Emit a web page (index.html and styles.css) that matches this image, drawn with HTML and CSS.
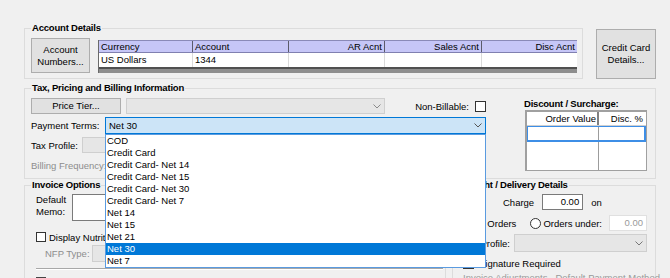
FILE: index.html
```html
<!DOCTYPE html>
<html lang="en">
<head>
  <meta charset="UTF-8">
  <title>Customer - Billing</title>
  <link rel="stylesheet" href="styles.css">
</head>
<body>
  <div class="form">

    <div class="row-top">
      <fieldset class="group acct">
        <legend>Account Details</legend>
        <div class="acct-body">
          <button class="btn btn-acct">Account<br>Numbers...</button>
          <div class="acct-grid">
            <div class="ag-head">
              <span>Currency</span>
              <span>Account</span>
              <span class="num">AR Acnt</span>
              <span class="num">Sales Acnt</span>
              <span class="num">Disc Acnt</span>
            </div>
            <div class="ag-row">
              <span>US Dollars</span>
              <span>1344</span>
              <span></span>
              <span></span>
              <span></span>
            </div>
            <div class="ag-bar"></div>
          </div>
        </div>
      </fieldset>
      <button class="btn btn-cc">Credit Card<br>Details...</button>
    </div>

    <fieldset class="group tax">
      <legend>Tax, Pricing and Billing Information</legend>
      <div class="tax-body">
        <div class="tax-left">
          <div class="line line-tier">
            <button class="btn btn-tier">Price Tier...</button>
            <div class="combo disabled tier-combo">
              <span></span>
              <svg width="8" height="5" viewBox="0 0 8 5"><polyline points="0.5,0.5 4,4 7.5,0.5" fill="none" stroke="#8a8a8a"/></svg>
            </div>
            <span class="nb-label">Non-Billable:</span>
            <span class="check"></span>
          </div>

          <div class="line line-terms">
            <span>Payment Terms:</span>
            <div class="combo-wrap">
              <div class="combo open">
                <span>Net 30</span>
                <svg width="8" height="5" viewBox="0 0 8 5"><polyline points="0.5,0.5 4,4 7.5,0.5" fill="none" stroke="#555"/></svg>
              </div>
              <ul class="drop">
                <li>COD</li>
                <li>Credit Card</li>
                <li>Credit Card- Net 14</li>
                <li>Credit Card- Net 15</li>
                <li>Credit Card- Net 30</li>
                <li>Credit Card- Net 7</li>
                <li>Net 14</li>
                <li>Net 15</li>
                <li>Net 21</li>
                <li class="sel">Net 30</li>
                <li>Net 7</li>
              </ul>
            </div>
          </div>

          <div class="line line-taxp">
            <span>Tax Profile:</span>
            <div class="combo disabled taxp-combo"><span></span></div>
          </div>

          <div class="line line-bill">Billing Frequency:</div>
        </div>

        <div class="tax-right">
          <div class="disc-title">Discount / Surcharge:</div>
          <div class="disc">
            <div class="disc-head"><span>Order Value</span><span>Disc. %</span></div>
            <div class="disc-sel"></div>
          </div>
        </div>
      </div>
    </fieldset>

    <div class="row-bottom">
      <fieldset class="group invoice">
        <legend>Invoice Options</legend>
        <div class="memo-row">
          <span class="memo-label">Default<br>Memo:</span>
          <div class="memo"></div>
        </div>
        <div class="nut-row">
          <span class="check small"></span>
          <span>Display Nutrition Facts Panel</span>
        </div>
        <div class="nfp-row">
          <span class="nfp-label">NFP Type:</span>
          <div class="combo disabled nfp-combo"><span></span></div>
        </div>
        <div class="sep"></div>
        <div class="last-row"><span class="check small dark"></span></div>
      </fieldset>

      <fieldset class="group freight">
        <legend>Freight / Delivery Details</legend>
        <div class="fr-charge">
          <span>Charge</span>
          <span class="field">0.00</span>
          <span class="on">on</span>
        </div>
        <div class="fr-orders">
          <span class="radio on-radio"></span>
          <span>All Orders</span>
          <span class="radio second"></span>
          <span class="under">Orders under:</span>
          <span class="field off">0.00</span>
        </div>
        <div class="fr-ship">
          <span class="ship-label">Ship Profile:</span>
          <div class="combo disabled ship-combo">
            <span></span>
            <svg width="8" height="5" viewBox="0 0 8 5"><polyline points="0.5,0.5 4,4 7.5,0.5" fill="none" stroke="#777"/></svg>
          </div>
        </div>
        <div class="fr-sig">
          <span class="check"></span>
          <span>Signature Required</span>
        </div>
        <div class="fr-more">Invoice Adjustments &nbsp; Default Payment Method</div>
      </fieldset>
    </div>

  </div>
</body>
</html>
```

FILE: styles.css
```css
* {
  box-sizing: border-box;
}

body {
  margin: 0;
  width: 670px;
  height: 278px;
  overflow: hidden;
  background: #f0f0f0;
  font-family: "Liberation Sans", Arial, sans-serif;
  font-size: 9.5px;
  color: #000;
}

.form {
  padding: 22px 0 0 24px;
}

/* group boxes */
.group {
  margin: 0;
  border: 1px solid #dcdcdc;
  min-inline-size: 0;
}
.group legend {
  padding: 0 1px;
  font-weight: bold;
  line-height: 12px;
  letter-spacing: -0.2px;
}

.btn {
  margin: 0;
  padding: 0;
  font: inherit;
  line-height: 12px;
  color: #000;
  background: #e1e1e1;
  border: 1px solid #adadad;
}

.check {
  display: inline-block;
  width: 11px;
  height: 11px;
  background: #fff;
  border: 1px solid #333;
}
.check.small {
  width: 10px;
  height: 10px;
}
.check.dark {
  background: #d0d0d0;
  border-color: #444;
}

.radio {
  display: inline-block;
  width: 11px;
  height: 11px;
  border: 1px solid #333;
  border-radius: 50%;
  background: #fff;
}
.radio.on-radio {
  background: radial-gradient(circle, #333 0 2px, #fff 2.5px);
}

.combo {
  display: flex;
  align-items: center;
  justify-content: space-between;
  padding: 0 3px;
  border: 1px solid #ccc;
}
.combo.disabled {
  background: #e6e6e6;
  border-color: #cfcfcf;
}
.combo.open {
  height: 17px;
  background: #cce4f7;
  border-color: #0078d7;
}

/* account details */
.row-top {
  display: flex;
  align-items: flex-start;
}
.acct {
  width: 559px;
  padding: 4px 5px 5px 6px;
}
.acct-body {
  display: flex;
  align-items: flex-start;
  gap: 8px;
}
.btn-acct {
  width: 59px;
  height: 35px;
}
.acct-grid {
  margin-top: 2px;
  width: 479px;
  border-left: 1px solid #6a6a6a;
}
.ag-head,
.ag-row {
  display: grid;
  grid-template-columns: 94px 96px 96px 97px 95px;
}
.ag-head {
  height: 13px;
  background: #c6c6f7;
  border-top: 1px solid #8a8ab8;
  border-bottom: 1px solid #8080b0;
  line-height: 11px;
}
.ag-head span {
  padding: 0 2px;
  border-right: 1px solid #5a5a6a;
}
.ag-head span:last-child {
  border-right: 0;
}
.ag-row {
  height: 14px;
  background: #fff;
  line-height: 14px;
}
.ag-row span {
  padding: 0 2px;
  border-right: 1px solid #dadada;
}
.ag-row span:last-child {
  border-right: 0;
}
.num {
  text-align: right;
}
.ag-bar {
  height: 6px;
  background: #8e8e8e;
  border-top: 2px solid #505050;
}
.btn-cc {
  margin: 7px 0 0 13px;
  width: 60px;
  height: 50px;
}

/* tax, pricing and billing */
.tax {
  width: 632px;
  margin-top: 3px;
  padding: 4px 8px 5px 6px;
}
.tax-body {
  display: flex;
}
.tax-left {
  width: 455px;
}
.line {
  display: flex;
  align-items: center;
}
.line-tier {
  height: 16px;
}
.btn-tier {
  width: 90px;
  height: 16px;
}
.tier-combo {
  margin-left: 5px;
  width: 259px;
  height: 16px;
}
.nb-label {
  margin-left: auto;
  margin-right: 6px;
}
.line-terms {
  margin-top: 3px;
  height: 17px;
}
.combo-wrap {
  position: relative;
  margin-left: auto;
  width: 381px;
}
.drop {
  position: absolute;
  top: 100%;
  left: 0;
  z-index: 5;
  width: 100%;
  margin: 0;
  padding: 0;
  list-style: none;
  background: #fff;
  border: 1px solid #5a9be0;
}
.drop li {
  height: 12px;
  padding-left: 1px;
  line-height: 12px;
}
.drop li.sel {
  background: #0078d7;
  color: #fff;
}
.line-taxp {
  margin-top: 3px;
  height: 16px;
}
.taxp-combo {
  margin-left: auto;
  width: 404px;
  height: 16px;
}
.line-bill {
  margin-top: 4px;
  height: 16px;
  color: #8d8d8d;
}
.tax-right {
  margin-left: auto;
  width: 123px;
}
.disc-title {
  font-weight: bold;
  line-height: 12px;
  letter-spacing: -0.2px;
}
.disc {
  margin-left: 1px;
  width: 122px;
  height: 61px;
  border: 1px solid #a0a0a0;
  border-width: 2px 1px 1px 2px;
  background: linear-gradient(#9c9c9c, #9c9c9c) 71px 0 / 1px 100% no-repeat, #fff;
}
.disc-head {
  display: flex;
  height: 14px;
  line-height: 13px;
  border-bottom: 1px solid #d0d0d0;
}
.disc-head span {
  text-align: right;
}
.disc-head span:first-child {
  width: 72px;
  padding-right: 1px;
  border-right: 2px solid #808080;
}
.disc-head span:last-child {
  flex: 1;
  padding-right: 3px;
}
.disc-sel {
  height: 16px;
  border: 1px solid #3d8ee6;
  border-width: 1px 2px 2px 1px;
}

/* invoice + freight */
.row-bottom {
  display: flex;
  align-items: flex-start;
  gap: 6px;
}
.invoice {
  width: 422px;
  height: 120px;
  padding: 3px 6px 0 6px;
}
.memo-row {
  display: flex;
  padding-left: 5px;
}
.memo-label {
  width: 36px;
  line-height: 12px;
}
.memo {
  width: 368px;
  height: 27px;
  background: #fff;
  border: 1px solid #7a7a7a;
}
.nut-row {
  display: flex;
  align-items: center;
  gap: 3px;
  margin-top: 10px;
  padding-left: 5px;
  height: 12px;
}
.nfp-row {
  display: flex;
  align-items: center;
  margin-top: 2px;
  padding-left: 14px;
  height: 17px;
}
.nfp-label {
  width: 47px;
  color: #8d8d8d;
}
.nfp-combo {
  width: 250px;
  height: 17px;
}
.sep {
  margin: 6px 0 0 5px;
  width: 407px;
  height: 2px;
  border-top: 1px solid #a8a8a8;
  border-bottom: 1px solid #fff;
}
.last-row {
  margin-top: 7px;
  padding-left: 5px;
}

.freight {
  width: 204px;
  height: 120px;
  padding: 3px 8px 0 8px;
}
.field {
  height: 16px;
  padding-right: 3px;
  line-height: 14px;
  text-align: right;
  background: #fff;
  border: 1px solid #7a7a7a;
}
.field.off {
  width: 38px;
  color: #9a9a9a;
  border-color: #e0e0e0;
}
.fr-charge {
  display: flex;
  align-items: center;
  height: 16px;
  padding-left: 42px;
}
.fr-charge .field {
  width: 41px;
  margin-left: 8px;
}
.on {
  margin-left: 8px;
}
.fr-orders {
  display: flex;
  align-items: center;
  justify-content: flex-end;
  margin-top: 5px;
  height: 16px;
}
.fr-orders > * {
  flex: none;
  white-space: nowrap;
}
.fr-orders .radio {
  margin: 0 2px 0 4px;
}
.fr-orders .radio.second {
  margin-left: 14px;
}
.fr-orders .under {
  margin-right: 7px;
}
.fr-ship {
  display: flex;
  align-items: center;
  justify-content: flex-end;
  margin-top: 3px;
  height: 18px;
}
.ship-label {
  flex: none;
  width: 60px;
  margin-right: 4px;
  text-align: right;
  white-space: nowrap;
}
.ship-combo {
  flex: none;
  width: 133px;
  height: 18px;
}
.fr-sig {
  display: flex;
  align-items: center;
  gap: 5px;
  margin-top: 5px;
  padding-left: 2px;
  height: 12px;
}
.fr-more {
  margin-top: 3px;
  padding-left: 2px;
  color: #9a9a9a;
  white-space: nowrap;
}
```
